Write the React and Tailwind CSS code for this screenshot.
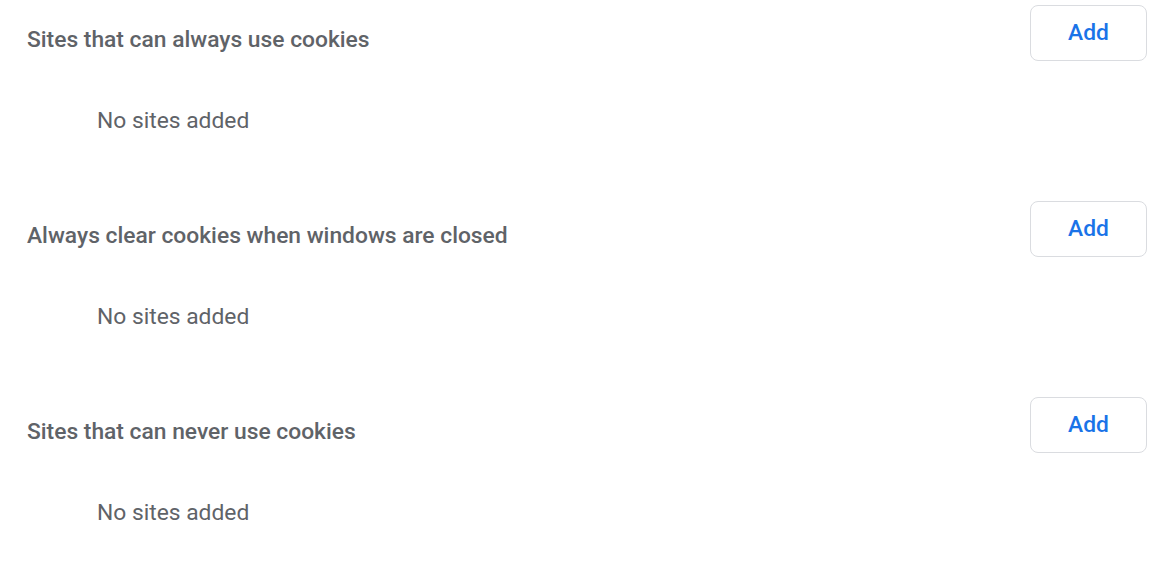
import React from "react";

const sections = [
  "Sites that can always use cookies",
  "Always clear cookies when windows are closed",
  "Sites that can never use cookies",
];

export default function App() {
  return (
    <div
      className="w-[1176px] h-[569px] bg-white overflow-hidden flex flex-col"
      style={{ fontFamily: "Roboto, 'Liberation Sans', sans-serif" }}
    >
      {sections.map((t) => (
        <div key={t} className="h-[196px] shrink-0 flex flex-col">
          <div className="flex items-start justify-between pl-[27px] pr-[29px]">
            <div className="mt-[27px] text-[22.8px] leading-[26px] font-medium text-[#5f6368]">
              {t}
            </div>
            <button className="mt-[5px] w-[117px] h-[56px] rounded-[8px] border border-[#dadce0] bg-white text-[22.8px] leading-[26px] font-medium text-[#1a73e8] flex items-center justify-center">
              Add
            </button>
          </div>
          <div className="mt-[47px] pl-[97px] text-[22.8px] leading-[26px] text-[#5f6368]">
            No sites added
          </div>
        </div>
      ))}
    </div>
  );
}
